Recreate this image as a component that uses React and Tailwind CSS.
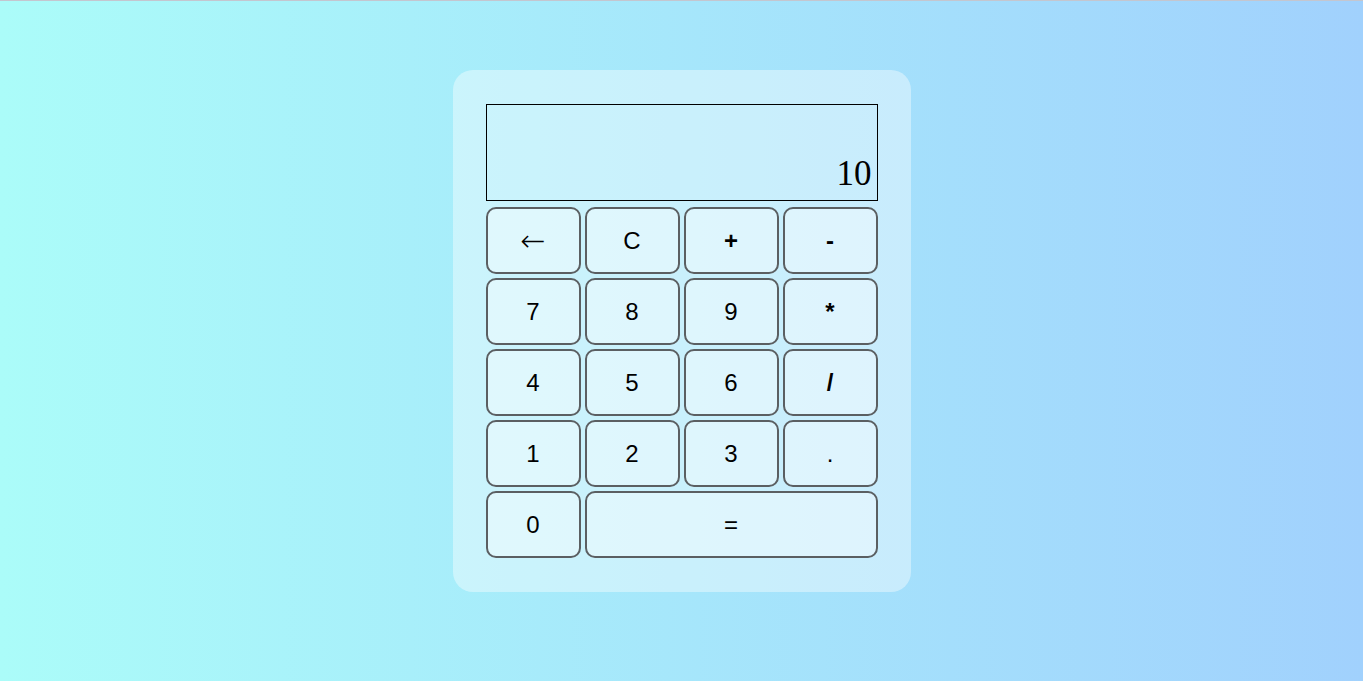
import React, { useState } from 'react';

const keys = [
  { label: '←', kind: 'arrow' },
  { label: 'C' },
  { label: '+', kind: 'op' },
  { label: '-', kind: 'op' },
  { label: '7' },
  { label: '8' },
  { label: '9' },
  { label: '*', kind: 'op' },
  { label: '4' },
  { label: '5' },
  { label: '6' },
  { label: '/', kind: 'op' },
  { label: '1' },
  { label: '2' },
  { label: '3' },
  { label: '.' },
  { label: '0' },
  { label: '=', wide: true },
];

function Calculator() {
  const [value, setValue] = useState('10');

  const press = (k) => {
    if (k === 'C') return setValue('');
    if (k === '←') return setValue((v) => v.slice(0, -1));
    if (k === '=') {
      try {
        // eslint-disable-next-line no-new-func
        setValue(String(Function('return (' + value + ')')()));
      } catch {
        setValue('Error');
      }
      return;
    }
    setValue((v) => v + k);
  };

  return (
    <div className="w-[458px] rounded-[20px] bg-white/40 px-[33px] py-[34px]">
      <div className="flex h-[97px] items-end justify-end border border-black px-[5px] pb-[6px] font-['Liberation_Serif',serif] text-[35px] leading-[normal] text-black">
        {value}
      </div>
      <div className="mt-[6px] grid grid-cols-4 auto-rows-[67px] gap-[4px]">
        {keys.map((k) => (
          <button
            key={k.label}
            onClick={() => press(k.label)}
            className={
              'flex items-center justify-center rounded-[10px] border-2 border-[#5b5f62] bg-white/40 text-black cursor-pointer ' +
              (k.wide ? 'col-span-3 ' : '') +
              (k.kind === 'op' ? 'font-bold ' : '') +
              (k.kind === 'arrow'
                ? "font-['DejaVu_Sans',sans-serif] text-[30px] font-extralight"
                : "font-['Liberation_Sans',Arial,sans-serif] text-[24px]")
            }
          >
            {k.label}
          </button>
        ))}
      </div>
    </div>
  );
}

export default function App() {
  return (
    <div className="flex min-h-[681px] items-start justify-center border-t border-[#c4c6cf] bg-[linear-gradient(to_right,#abfcf9,#a1d1fd)] pt-[69px]">
      <Calculator />
    </div>
  );
}
